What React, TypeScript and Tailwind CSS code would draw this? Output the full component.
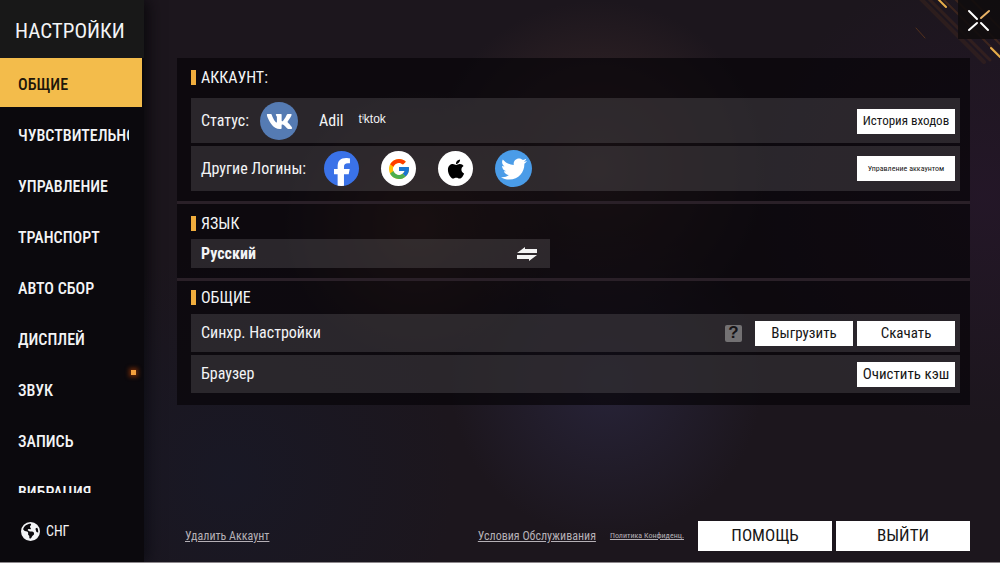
import React, { useState } from 'react';
import { FaApple, FaTwitter, FaVk } from 'react-icons/fa';
import { FaEarthAmericas, FaFacebookF } from 'react-icons/fa6';
import { FcGoogle } from 'react-icons/fc';

const tabs = [
    { id: 'general', label: 'ОБЩИЕ' },
    { id: 'sensitivity', label: 'ЧУВСТВИТЕЛЬНОСТЬ' },
    { id: 'controls', label: 'УПРАВЛЕНИЕ' },
    { id: 'transport', label: 'ТРАНСПОРТ' },
    { id: 'pickup', label: 'АВТО СБОР' },
    { id: 'display', label: 'ДИСПЛЕЙ' },
    { id: 'sound', label: 'ЗВУК', badge: true },
    { id: 'record', label: 'ЗАПИСЬ' },
    { id: 'vibration', label: 'ВИБРАЦИЯ' },
];

function Sidebar() {
    const [active, setActive] = useState('general');

    return (
        <aside className="flex w-[144px] shrink-0 flex-col bg-[#0b090d] shadow-[4px_0_14px_#0a080c]">
            <h1 className="flex h-[58px] shrink-0 items-center bg-[#181818] pt-1.5 pl-[15px] text-[21px] text-gray-100">НАСТРОЙКИ</h1>
            <nav className="flex h-0 flex-auto flex-col gap-0.5 overflow-hidden pr-0.5">
                {tabs.map((tab) => (
                    <button
                        key={tab.id}
                        type="button"
                        onClick={() => setActive(tab.id)}
                        className={`relative h-[49px] shrink-0 cursor-pointer pr-[13px] pl-[18px] text-left text-[16px] font-medium ${active === tab.id
                            ? 'bg-[#f3bc4b] text-[#20160a]'
                            : 'text-gray-100'
                            }`}
                    >
                        <span className="block overflow-hidden pt-1 whitespace-nowrap">{tab.label}</span>
                        {tab.badge && <span className="absolute top-1.5 right-1.5 size-[5px] bg-[#f5a03c] shadow-[0_0_4px_2px_#6a2808]"></span>}
                    </button>
                ))}
            </nav>
            <button type="button" className="mt-[11px] mb-[3px] flex h-[55px] shrink-0 cursor-pointer items-center gap-1.5 pl-[21px] text-[14px] text-gray-100">
                <FaEarthAmericas className="size-[19px]" />
                СНГ
            </button>
        </aside>
    );
}

function SectionTitle({ children }: { children: React.ReactNode }) {
    return (
        <h2 className="flex h-[22px] items-center gap-[5px] text-[16px] text-gray-100">
            <span className="h-[15px] w-[5px] bg-[#f0ad3d]"></span>
            <span className="pt-0.5">{children}</span>
        </h2>
    );
}

function SmallButton({ children, className = 'text-[15px]' }: { children: React.ReactNode; className?: string }) {
    return (
        <button type="button" className={`h-[25px] w-[98px] shrink-0 cursor-pointer bg-white whitespace-nowrap text-[#161616] ${className}`}>
            {children}
        </button>
    );
}

function App() {
    return (
        <div className="flex h-screen overflow-hidden border-b border-[#8d888c] bg-[#1c161d] font-['Liberation_Sans_Narrow','Roboto_Condensed',Roboto,sans-serif]">
            <Sidebar />
            <main className="relative flex min-w-0 flex-auto flex-col bg-[radial-gradient(circle_at_32%_40%,#5a382caa,transparent_20%),radial-gradient(circle_at_53%_30%,#54383499,transparent_28%),radial-gradient(circle_at_10%_85%,#161a2c88,transparent_25%),radial-gradient(circle_at_54%_68%,#2d2a46aa,transparent_26%),radial-gradient(circle_at_98%_35%,#2a173088,transparent_25%)] pt-[58px] pr-[30px] pl-[33px]">
                <svg className="absolute top-0 right-0 h-16 w-36" viewBox="0 0 144 64" fill="none" strokeLinecap="round" aria-hidden="true">
                    <g stroke="#6b3d1b">
                        <path d="M64 -2l64 64" strokeWidth="4" opacity=".2" />
                        <path d="M72 -2l62 62" strokeWidth="3" opacity=".25" />
                        <path d="M84 -4l60 60M98 -2l46 46M112 -4l32 32" strokeWidth="2" opacity=".4" />
                        <path d="M60 28l9 10" strokeWidth="1" opacity=".7" />
                    </g>
                    <path d="M82 -1l8 8M135 48l9 9" stroke="#e6ad4a" strokeWidth="2" />
                </svg>
                <button type="button" aria-label="Закрыть" className="absolute top-0 right-0 flex h-[39px] w-[42px] cursor-pointer items-center justify-center bg-[#0f0c0ddd]">
                    <svg className="size-6" viewBox="0 0 24 24" fill="none" strokeWidth="2" strokeLinecap="round">
                        <path d="M2 3l8 8M14 15l7 7M2 22l8-7" stroke="#fff" />
                        <path d="M14 10l8-7" stroke="#e9b366" />
                    </svg>
                </button>

                <div className="bg-[#08060abb]">
                    <section className="border-b-3 border-[#2a2028] pt-2 pr-2.5 pb-2.5 pl-3.5">
                        <SectionTitle>АККАУНТ:</SectionTitle>
                        <div className="mt-2.5 flex flex-col gap-[3px] text-[16px] text-gray-100">
                            <div className="flex h-[45px] items-center bg-[#7c787a44] pt-px pr-[5px] pl-2.5">
                                <span className="w-[59px]">Статус:</span>
                                <span className="flex size-[38px] items-center justify-center rounded-full bg-[#557bb3] text-white">
                                    <FaVk className="size-[27px]" />
                                </span>
                                <span className="ml-[21px]">Adil</span>
                                <span className="mb-1 ml-[15px] flex-auto font-['Liberation_Sans',sans-serif] text-[12px]">tⁱktok</span>
                                <SmallButton className="text-[13px]">История входов</SmallButton>
                            </div>
                            <div className="flex h-[45px] items-center bg-[#7c787a44] pr-[5px] pl-2.5">
                                <span className="w-[123px] whitespace-nowrap">Другие Логины:</span>
                                <div className="flex flex-auto items-center gap-[22px]">
                                    <button type="button" aria-label="Facebook" className="flex size-[35px] cursor-pointer items-end justify-center overflow-hidden rounded-full bg-[#3a72e8] text-white">
                                        <FaFacebookF className="size-[28px]" />
                                    </button>
                                    <button type="button" aria-label="Google" className="flex size-[35px] cursor-pointer items-center justify-center rounded-full bg-white">
                                        <FcGoogle className="size-[24px]" />
                                    </button>
                                    <button type="button" aria-label="Apple" className="flex size-[35px] cursor-pointer items-center justify-center rounded-full bg-white text-black">
                                        <FaApple className="size-[22px]" />
                                    </button>
                                    <button type="button" aria-label="Twitter" className="flex size-[37px] cursor-pointer items-center justify-center rounded-full bg-[#4a9ce8] text-white">
                                        <FaTwitter className="size-[26px]" />
                                    </button>
                                </div>
                                <SmallButton className="text-[8px]">Управление аккаунтом</SmallButton>
                            </div>
                        </div>
                    </section>

                    <section className="border-b-3 border-[#2a2028] pt-2 pr-4 pb-2.5 pl-3.5">
                        <SectionTitle>ЯЗЫК</SectionTitle>
                        <button type="button" className="mt-[5px] flex h-[29px] w-[47%] cursor-pointer items-center justify-between bg-[#7c787a44] pr-3 pl-2.5 text-[16px] font-bold text-gray-100">
                            Русский
                            <svg className="h-4 w-[22px]" viewBox="0 0 22 16" fill="#f3f3f3" aria-hidden="true">
                                <path d="M1 7L9 1v2h12v4zM21 9l-8 6v-2H1V9z" />
                            </svg>
                        </button>
                    </section>

                    <section className="pt-[5px] pr-2.5 pb-3 pl-3.5">
                        <SectionTitle>ОБЩИЕ</SectionTitle>
                        <div className="mt-1.5 flex flex-col gap-[3px] text-[16px] text-gray-100">
                            <div className="flex h-[38px] items-center bg-[#7c787a44] pr-[5px] pl-2.5">
                                <span className="flex-auto">Синхр. Настройки</span>
                                <button type="button" aria-label="Справка" className="mr-[13px] flex size-[17px] cursor-pointer items-center justify-center rounded-xs bg-[#737173] font-['Liberation_Sans',sans-serif] text-[17px] font-bold text-[#161417]">?</button>
                                <div className="flex gap-1">
                                    <SmallButton>Выгрузить</SmallButton>
                                    <SmallButton>Скачать</SmallButton>
                                </div>
                            </div>
                            <div className="flex h-[38px] items-center bg-[#7c787a44] pr-[5px] pl-2.5">
                                <span className="flex-auto">Браузер</span>
                                <SmallButton>Очистить кэш</SmallButton>
                            </div>
                        </div>
                    </section>
                </div>

                <footer className="mt-auto mb-[11px] flex items-center pl-2 text-[12px] whitespace-nowrap text-[#b5b0b6]">
                    <a href="#delete" className="underline">Удалить Аккаунт</a>
                    <a href="#terms" className="ml-auto underline">Условия Обслуживания</a>
                    <a href="#privacy" className="ml-3.5 text-[8px] underline">Политика Конфиденц.</a>
                    <div className="ml-3.5 flex gap-1 text-[17px] text-[#161616]">
                        <button type="button" className="h-[30px] w-[134px] cursor-pointer bg-white">ПОМОЩЬ</button>
                        <button type="button" className="h-[30px] w-[134px] cursor-pointer bg-white">ВЫЙТИ</button>
                    </div>
                </footer>
            </main>
        </div>
    );
}

export default App;
